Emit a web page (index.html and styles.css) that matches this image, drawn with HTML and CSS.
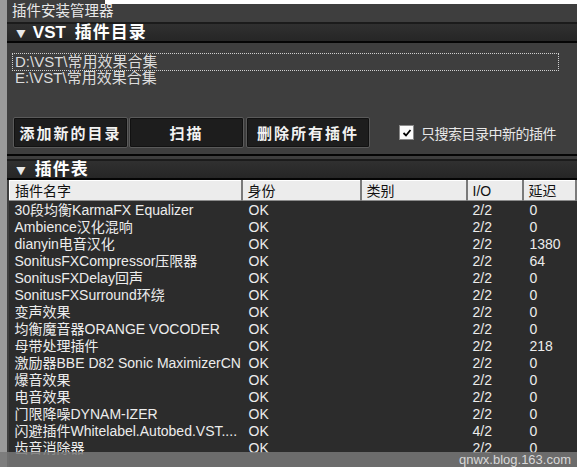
FILE: index.html
```html
<!DOCTYPE html>
<html>
<head>
  <meta charset="UTF-8">
  <title>插件安装管理器</title>
  <link rel="stylesheet" href="styles.css">
</head>
<body>
  <div class="window">
    <div class="title-row">
      <div class="title-tab">插件安装管理器</div>
      <div class="title-fill"></div>
    </div>

    <div class="section-bar">
      <span class="arrow">▼</span>
      <span class="section-title"><b class="latin">VST</b> 插件目录</span>
    </div>

    <div class="dir-panel">
      <ul class="dir-list">
        <li class="dir-item selected">D:\VST\常用效果合集</li>
        <li class="dir-item">E:\VST\常用效果合集</li>
      </ul>

      <div class="controls">
        <button class="dark-btn add">添加新的目录</button>
        <button class="dark-btn scan">扫描</button>
        <button class="dark-btn remove">删除所有插件</button>
        <label class="check">
          <span class="box">
            <svg viewBox="0 0 10 10" width="10" height="10">
              <path d="M1.5 5 L4 7.5 L8.5 2" fill="none" stroke="#000" stroke-width="1.8"></path>
            </svg>
          </span>
          只搜索目录中新的插件
        </label>
      </div>
    </div>

    <div class="divider"></div>

    <div class="section-bar second">
      <span class="arrow">▼</span>
      <span class="section-title">插件表</span>
    </div>

    <div class="table-wrap">
      <table class="plugins">
        <thead>
          <tr>
            <th class="c-name">插件名字</th>
            <th class="c-state">身份</th>
            <th class="c-type">类别</th>
            <th class="c-io">I/O</th>
            <th class="c-lat">延迟</th>
          </tr>
        </thead>
        <tbody>
          <tr><td>30段均衡KarmaFX Equalizer</td><td>OK</td><td></td><td>2/2</td><td>0</td></tr>
          <tr><td>Ambience汉化混响</td><td>OK</td><td></td><td>2/2</td><td>0</td></tr>
          <tr><td>dianyin电音汉化</td><td>OK</td><td></td><td>2/2</td><td>1380</td></tr>
          <tr><td>SonitusFXCompressor压限器</td><td>OK</td><td></td><td>2/2</td><td>64</td></tr>
          <tr><td>SonitusFXDelay回声</td><td>OK</td><td></td><td>2/2</td><td>0</td></tr>
          <tr><td>SonitusFXSurround环绕</td><td>OK</td><td></td><td>2/2</td><td>0</td></tr>
          <tr><td>变声效果</td><td>OK</td><td></td><td>2/2</td><td>0</td></tr>
          <tr><td>均衡魔音器ORANGE VOCODER</td><td>OK</td><td></td><td>2/2</td><td>0</td></tr>
          <tr><td>母带处理插件</td><td>OK</td><td></td><td>2/2</td><td>218</td></tr>
          <tr><td>激励器BBE D82 Sonic MaximizerCN</td><td>OK</td><td></td><td>2/2</td><td>0</td></tr>
          <tr><td>爆音效果</td><td>OK</td><td></td><td>2/2</td><td>0</td></tr>
          <tr><td>电音效果</td><td>OK</td><td></td><td>2/2</td><td>0</td></tr>
          <tr><td>门限降噪DYNAM-IZER</td><td>OK</td><td></td><td>2/2</td><td>0</td></tr>
          <tr><td>闪避插件Whitelabel.Autobed.VST....</td><td>OK</td><td></td><td>4/2</td><td>0</td></tr>
          <tr><td>齿音消除器</td><td>OK</td><td></td><td>2/2</td><td>0</td></tr>
        </tbody>
      </table>
    </div>

    <div class="watermark">qnwx.blog.163.com</div>
  </div>
</body>
</html>
```

FILE: styles.css
```css
* {
  margin: 0;
  padding: 0;
  box-sizing: border-box;
}

body {
  font-family: "Liberation Sans", "Noto Sans CJK SC", sans-serif;
  font-size: 14px;
  background: #9a9a9a;
  color: #e6e6e6;
  width: 577px;
  height: 467px;
  overflow: hidden;
}

.window {
  position: relative;
  height: 467px;
  margin-left: 7px;
  background: #3e3e3e;
  display: flex;
  flex-direction: column;
}

/* title */

.title-row {
  display: flex;
  height: 22px;
}

.title-tab {
  width: 98px;
  padding: 3px 0 0 5px;
  line-height: 17px;
  font-size: 14.5px;
  color: #e8e8e8;
  white-space: nowrap;
}

.title-fill {
  flex: 1;
  border-top: 4px solid #fff;
}

/* section headers */

.section-bar {
  height: 21px;
  display: flex;
  align-items: center;
  gap: 5px;
  padding-left: 7px;
  background: linear-gradient(#303030, #262626);
  border-top: 2px solid #1b1b1b;
  border-bottom: 2px solid #050505;
  color: #fff;
  font-weight: bold;
}

.arrow {
  font-size: 14px;
  color: #e8e8e8;
  transform: scaleX(1.1);
}

.section-title {
  font-size: 17px;
  letter-spacing: 1px;
  line-height: 17px;
}

.latin {
  letter-spacing: 0;
  margin-right: 3px;
}

/* directory list */

.dir-panel {
  padding: 11px 19px 0 6px;
}

.dir-list {
  list-style: none;
  height: 63px;
}

.dir-item {
  height: 15px;
  line-height: 15px;
  font-size: 15px;
  padding-left: 2px;
  color: #dcdcdc;
}

.dir-item.selected {
  outline: 1px dotted #d0d0d0;
  outline-offset: 0;
  height: 16px;
}

.controls {
  display: flex;
  align-items: center;
  height: 31px;
  margin-right: -13px;
}

.dark-btn {
  height: 31px;
  background: #1d1d1d;
  border: 1px solid #5a5a5a;
  border-radius: 2px;
  box-shadow: inset 0 0 0 1px #111;
  color: #f2f2f2;
  font-family: inherit;
  font-size: 15px;
  font-weight: bold;
  letter-spacing: 2px;
  margin-right: 1px;
}

.dark-btn.add {
  width: 115px;
}

.dark-btn.scan {
  width: 115px;
}

.dark-btn.remove {
  width: 124px;
  margin-left: 1px;
}

.check {
  display: flex;
  align-items: center;
  gap: 7px;
  margin-left: 28px;
  font-size: 14px;
  color: #e8e8e8;
  letter-spacing: -0.5px;
}

.box {
  width: 15px;
  height: 15px;
  background: #fafafa;
  border: 1px solid #8a8a8a;
  display: flex;
  align-items: center;
  justify-content: center;
}

.divider {
  height: 2px;
  margin-top: 6px;
  background: #050505;
}

.section-bar.second {
  margin-top: 3px;
}

.second .section-title {
  letter-spacing: 1px;
  margin-left: 2px;
}

/* plugin table */

.table-wrap {
  flex: 1;
  margin-left: 2px;
  background: #2c2c2c;
  overflow: hidden;
}

.plugins {
  border-collapse: collapse;
  table-layout: fixed;
  width: 568px;
}

.plugins th {
  height: 20px;
  background: #ececec;
  color: #111;
  font-weight: normal;
  text-align: left;
  padding: 0 0 0 5px;
  border: 1px solid #8c8c8c;
  border-top-color: #fff;
  border-left-color: #fff;
  border-right: 2px solid #7a7a7a;
  line-height: 18px;
}

.plugins .c-name { width: 232px; }
.plugins .c-state { width: 119px; }
.plugins .c-type { width: 106px; }
.plugins .c-io { width: 56px; }

.plugins tbody tr:first-child td {
  padding-top: 1px;
  height: 18px;
}

.plugins td {
  height: 17px;
  line-height: 16px;
  padding-left: 5px;
  color: #ececec;
  white-space: nowrap;
  overflow: hidden;
}

.plugins td:nth-child(2) {
  padding-left: 7px;
}

.plugins td:nth-child(4) {
  padding-left: 6px;
}

.plugins td:nth-child(5) {
  padding-left: 7px;
}

.watermark {
  position: absolute;
  left: -7px;
  right: 0;
  bottom: 0;
  height: 15px;
  background: rgba(120, 120, 120, 0.85);
  color: #d8d8d8;
  font-size: 13px;
  line-height: 15px;
  text-align: right;
  padding-right: 6px;
}
```
